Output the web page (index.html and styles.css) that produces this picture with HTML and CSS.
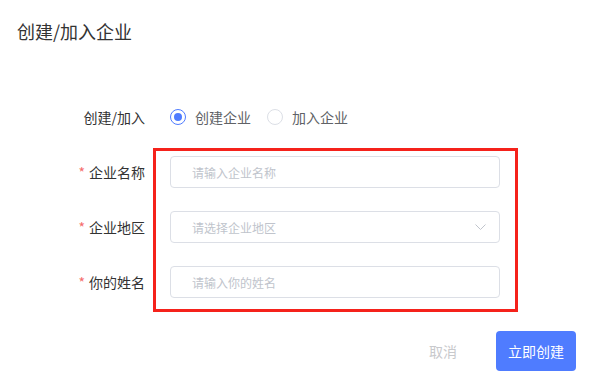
FILE: index.html
```html
<!DOCTYPE html>
<html lang="zh-CN">
<head>
    <meta charset="UTF-8">
    <meta name="viewport" content="width=device-width, initial-scale=1.0">
    <link rel="stylesheet" href="styles.css">
    <title>创建/加入企业</title>
</head>
<body>

<div class="dialog">
    <div class="dialog-title">创建/加入企业</div>

    <div class="form">
        <div class="form-row">
            <div class="form-label">创建/加入</div>
            <div class="radio-group">
                <label class="radio checked"><span class="radio-dot"></span>创建企业</label>
                <label class="radio"><span class="radio-dot"></span>加入企业</label>
            </div>
        </div>

        <div class="fields">
            <div class="form-row">
                <div class="form-label"><span class="req">*</span>企业名称</div>
                <input class="input" type="text" placeholder="请输入企业名称">
            </div>
            <div class="form-row">
                <div class="form-label"><span class="req">*</span>企业地区</div>
                <div class="input select">
                    <span class="placeholder">请选择企业地区</span>
                    <svg width="11" height="7" viewBox="0 0 11 7"><polyline points="0.5,0.5 5.5,5.5 10.5,0.5" fill="none" stroke="#c0c4cc" stroke-width="1"/></svg>
                </div>
            </div>
            <div class="form-row">
                <div class="form-label"><span class="req">*</span>你的姓名</div>
                <input class="input" type="text" placeholder="请输入你的姓名">
            </div>

            <!-- 标注框 -->
            <div class="highlight"></div>
        </div>
    </div>

    <div class="dialog-footer">
        <button class="btn btn-text">取消</button>
        <button class="btn btn-primary">立即创建</button>
    </div>
</div>

</body>
</html>
```

FILE: styles.css
```css
body {
    margin: 0;
    background: #fff;
    font-family: "Noto Sans CJK SC", "Noto Sans", sans-serif;
    color: #303133;
}

.dialog {
    width: 593px;
    height: 392px;
}

.dialog-title {
    height: 62px;
    display: flex;
    align-items: center;
    padding-left: 17px;
    font-size: 18px;
    color: #333;
}

.form {
    padding-top: 39px;
    display: flex;
    flex-direction: column;
    gap: 23px;
}

.fields {
    position: relative;
    display: flex;
    flex-direction: column;
    gap: 23px;
}

.form-row {
    display: flex;
    align-items: center;
    height: 32px;
}

.form-label {
    width: 170px;
    padding-right: 25px;
    box-sizing: border-box;
    text-align: right;
    font-size: 14px;
    color: #333;
}

.req {
    color: #f56c6c;
    margin-right: 4px;
}

.radio-group {
    display: flex;
    align-items: center;
    gap: 16px;
}

.radio {
    display: flex;
    align-items: center;
    gap: 9px;
    font-size: 14px;
    color: #606266;
}

.radio-dot {
    width: 16px;
    height: 16px;
    box-sizing: border-box;
    border: 1px solid #dcdfe6;
    border-radius: 50%;
    display: flex;
    align-items: center;
    justify-content: center;
}

.radio.checked .radio-dot {
    border-color: #4f7cff;
}

.radio.checked .radio-dot::after {
    content: "";
    width: 8px;
    height: 8px;
    border-radius: 50%;
    background: #4f7cff;
}

.input {
    width: 330px;
    height: 32px;
    box-sizing: border-box;
    border: 1px solid #dcdfe6;
    border-radius: 4px;
    padding: 0 13px 0 21px;
    font-family: inherit;
    font-size: 12px;
    color: #606266;
    outline: none;
    margin: 0;
}

.input::placeholder {
    color: #c0c4cc;
}

.select {
    display: flex;
    align-items: center;
    justify-content: space-between;
}

.placeholder {
    color: #c0c4cc;
}

.highlight {
    position: absolute;
    left: 153px;
    top: -8px;
    width: 365px;
    height: 164px;
    box-sizing: border-box;
    border: 3px solid #f5221b;
    pointer-events: none;
}

.dialog-footer {
    display: flex;
    justify-content: flex-end;
    gap: 13px;
    padding: 33px 17px 0 0;
}

.btn {
    width: 80px;
    height: 40px;
    border: none;
    border-radius: 4px;
    font-family: inherit;
    font-size: 14px;
    cursor: pointer;
}

.btn-text {
    background: none;
    color: #c8c9cc;
}

.btn-primary {
    background: #4f7cff;
    color: #fff;
}
```
